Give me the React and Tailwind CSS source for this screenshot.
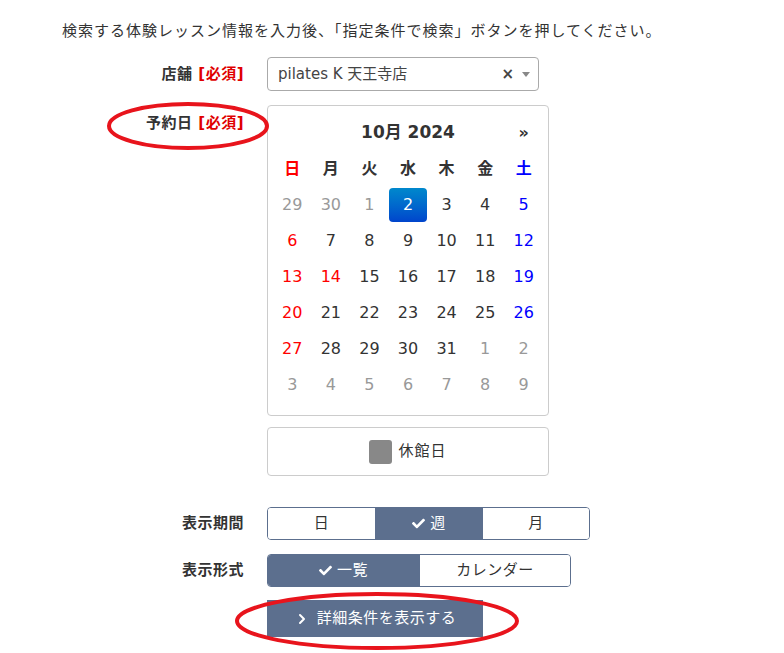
import { FaCheck } from 'react-icons/fa';
import { ChevronRight } from 'lucide-react';

const FONT = { fontFamily: '"DejaVu Sans", "Noto Sans CJK JP", sans-serif' };

const weekdays = [
  { label: '日', cls: 'text-[#ff0000]' },
  { label: '月', cls: 'text-[#333]' },
  { label: '火', cls: 'text-[#333]' },
  { label: '水', cls: 'text-[#333]' },
  { label: '木', cls: 'text-[#333]' },
  { label: '金', cls: 'text-[#333]' },
  { label: '土', cls: 'text-[#0000ff]' },
];

// each day: [number, type] type: o = other month, s = selected, h = holiday
const weeks = [
  [[29, 'o'], [30, 'o'], [1, 'o'], [2, 's'], [3], [4], [5]],
  [[6], [7], [8], [9], [10], [11], [12]],
  [[13], [14, 'h'], [15], [16], [17], [18], [19]],
  [[20], [21], [22], [23], [24], [25], [26]],
  [[27], [28], [29], [30], [31], [1, 'o'], [2, 'o']],
  [[3, 'o'], [4, 'o'], [5, 'o'], [6, 'o'], [7, 'o'], [8, 'o'], [9, 'o']],
];

function dayClass(type, col) {
  if (type === 'o') return 'text-[#999]';
  if (type === 'h') return 'text-[#ff0000]';
  if (col === 0) return 'text-[#ff0000]';
  if (col === 6) return 'text-[#0000ff]';
  return 'text-[#333]';
}

function Label({ children, required }) {
  return (
    <div className="w-[205px] shrink-0 pr-[23px] text-right text-[15px] font-bold tracking-[0.5px] text-[#333]">
      {children}
      {required && <span className="text-[#e00000]"> [必須]</span>}
    </div>
  );
}

function Calendar() {
  return (
    <div className="w-[282px] rounded border border-[#ccc] bg-white px-[5px] pt-[9px] pb-[12px]">
      <div className="grid grid-cols-7 h-[36px] items-center text-[17px] font-bold text-[#333]">
        <div />
        <div className="col-span-5 text-center">10月 2024</div>
        <div className="text-center text-[16px]">»</div>
      </div>
      <div className="grid grid-cols-7 h-[36px] items-center text-[16px] font-bold">
        {weekdays.map((w) => (
          <div key={w.label} className={`text-center ${w.cls}`}>
            {w.label}
          </div>
        ))}
      </div>
      {weeks.map((week, i) => (
        <div key={i} className="grid grid-cols-7 h-[36px] items-center text-[16px]">
          {week.map(([n, type], col) =>
            type === 's' ? (
              <div
                key={col}
                className="flex h-[34px] items-center justify-center rounded bg-gradient-to-b from-[#0088cc] to-[#0044cc] text-white"
              >
                {n}
              </div>
            ) : (
              <div key={col} className={`text-center ${dayClass(type, col)}`}>
                {n}
              </div>
            )
          )}
        </div>
      ))}
    </div>
  );
}

function Segmented({ items, width }) {
  return (
    <div className="flex h-[33px] rounded border border-[#5c6f8e] overflow-hidden">
      {items.map((it, i) => (
        <div
          key={it.label}
          className={`flex items-center justify-center gap-[5px] text-[15px] tracking-[0.5px] ${
            it.active ? 'bg-[#5c6f8e] text-white' : 'bg-white text-[#333]'
          } ${i > 0 ? 'border-l border-[#5c6f8e]' : ''}`}
          style={{ width }}
        >
          {it.active && <FaCheck className="text-[13px]" />}
          {it.label}
        </div>
      ))}
    </div>
  );
}

export default function App() {
  return (
    <div className="relative min-h-[653px] w-[784px] bg-white leading-[1.4]" style={FONT}>
      <p className="pl-[62px] pt-[21px] text-[15px] tracking-[1px] text-[#333] m-0">
        検索する体験レッスン情報を入力後、「指定条件で検索」ボタンを押してください。
      </p>

      <div className="mt-[15px] pl-[62px]">
        <div className="flex items-center">
          <Label required>店舗</Label>
          <div className="flex h-[34px] w-[272px] items-center rounded border border-[#aaa] pl-[10px] pr-[8px]">
            <span className="flex-1 text-[15px] text-[#444]">pilates K 天王寺店</span>
            <span className="text-[15px] font-bold text-[#444]">×</span>
            <span className="ml-[8px] mt-[1px] h-0 w-0 border-x-[4px] border-t-[5px] border-x-transparent border-t-[#888]" />
          </div>
        </div>

        <div className="mt-[14px] flex">
          <div className="pt-[8px]">
            <Label required>予約日</Label>
          </div>
          <div>
            <Calendar />
            <div className="mt-[11px] flex h-[49px] w-[282px] items-center justify-center gap-[6px] rounded border border-[#ccc]">
              <span className="h-[24px] w-[23px] rounded-[3px] bg-[#888]" />
              <span className="text-[15px] tracking-[1px] text-[#333]">休館日</span>
            </div>
          </div>
        </div>

        <div className="mt-[31px] flex items-center">
          <Label>表示期間</Label>
          <Segmented
            width={107}
            items={[{ label: '日' }, { label: '週', active: true }, { label: '月' }]}
          />
        </div>

        <div className="mt-[14px] flex items-center">
          <Label>表示形式</Label>
          <Segmented
            width={151}
            items={[{ label: '一覧', active: true }, { label: 'カレンダー' }]}
          />
        </div>

        <div className="mt-[13px] flex">
          <div className="w-[205px] shrink-0" />
          <div className="flex h-[37px] w-[216px] items-center justify-center gap-[7px] bg-[#5c6f8e] text-[15px] tracking-[0.5px] text-white">
            <ChevronRight size={16} strokeWidth={3} />
            詳細条件を表示する
          </div>
        </div>
      </div>

      <svg className="pointer-events-none absolute left-0 top-0" width="784" height="653">
        <ellipse cx="188" cy="126" rx="79" ry="22" fill="none" stroke="#e8141c" strokeWidth="4" />
        <ellipse cx="377" cy="621" rx="140" ry="27" fill="none" stroke="#e8141c" strokeWidth="4" />
      </svg>
    </div>
  );
}
